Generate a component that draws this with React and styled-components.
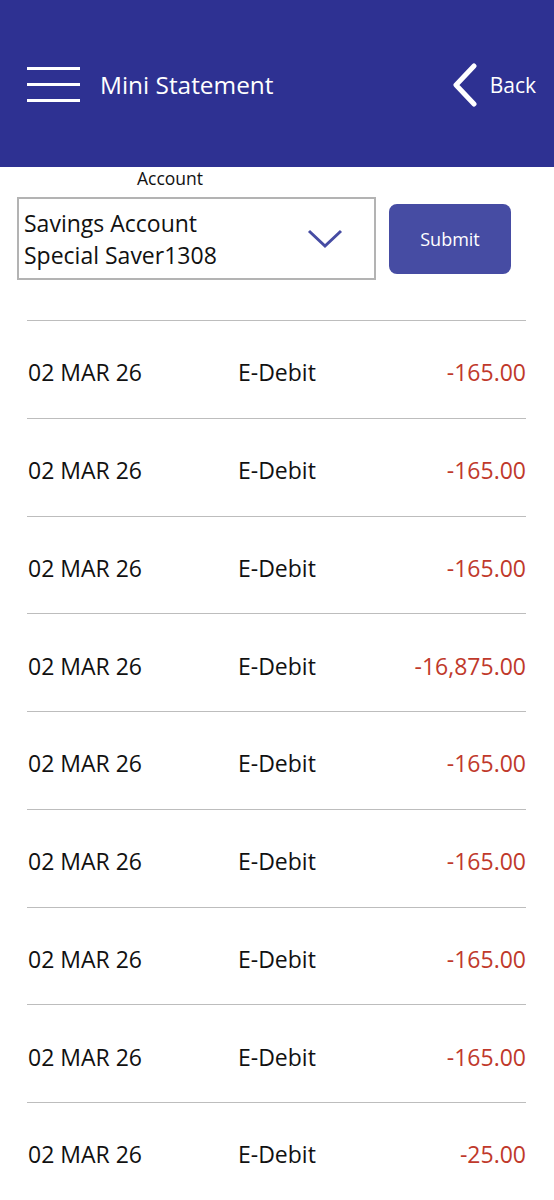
import React from "react";
import styled, { createGlobalStyle } from "styled-components";

const GlobalStyle = createGlobalStyle`
  body {
    margin: 0;
    background: #ffffff;
    font-family: "Open Sans", "Noto Sans", sans-serif;
  }
`;

const Page = styled.div`
  width: 554px;
  min-height: 1200px;
  background: #ffffff;
  overflow: hidden;
`;

const Header = styled.header`
  height: 167px;
  background: #2e3192;
  display: flex;
  align-items: center;
  padding: 2px 18px 0 27px;
  box-sizing: border-box;
  color: #ffffff;
`;

const Hamburger = styled.div`
  width: 53px;
  display: flex;
  flex-direction: column;
  gap: 13px;
  span {
    display: block;
    height: 3px;
    background: #ffffff;
  }
`;

const Title = styled.h1`
  margin: 0 0 0 20px;
  font-size: 24.4px;
  font-weight: 400;
  flex: 1;
`;

const BackButton = styled.div`
  display: flex;
  align-items: center;
  gap: 11px;
  font-size: 21px;
`;

const Form = styled.div`
  padding: 0 0 0 17px;
`;

const Label = styled.div`
  font-size: 17.5px;
  color: #111;
  padding-left: 120px;
  height: 30px;
  line-height: 22px;
`;

const Controls = styled.div`
  display: flex;
  align-items: center;
  gap: 13px;
`;

const Select = styled.div`
  width: 359px;
  height: 83px;
  box-sizing: border-box;
  border: 2px solid #b3b3b3;
  display: flex;
  align-items: center;
  justify-content: space-between;
  padding: 0 31px 0 5px;
  font-size: 23px;
  line-height: 32px;
  color: #111;
`;

const SubmitButton = styled.button`
  width: 122px;
  height: 70px;
  border: none;
  border-radius: 8px;
  background: #464ca3;
  color: #ffffff;
  font-family: inherit;
  font-size: 18px;
`;

const List = styled.div`
  margin: 40px 28px 0 27px;
`;

const Row = styled.div`
  height: 97.75px;
  box-sizing: border-box;
  border-top: 1.5px solid #bdbdbd;
  display: grid;
  grid-template-columns: 210px 1fr auto;
  align-items: center;
  padding: 6px 0 0 1px;
  font-size: 23px;
  color: #111;
`;

const Amount = styled.span`
  color: #c0392b;
  text-align: right;
`;

const rows = [
  "-165.00",
  "-165.00",
  "-165.00",
  "-16,875.00",
  "-165.00",
  "-165.00",
  "-165.00",
  "-165.00",
  "-25.00",
];

export default function App() {
  return (
    <Page>
      <GlobalStyle />
      <Header>
        <Hamburger>
          <span />
          <span />
          <span />
        </Hamburger>
        <Title>Mini Statement</Title>
        <BackButton>
          <svg width="28" height="44" viewBox="0 0 28 44">
            <path
              d="M23 3 L5 22 L23 41"
              fill="none"
              stroke="#fff"
              strokeWidth="5"
              strokeLinecap="round"
              strokeLinejoin="round"
            />
          </svg>
          Back
        </BackButton>
      </Header>
      <Form>
        <Label>Account</Label>
        <Controls>
          <Select>
            <div>
              Savings Account
              <br />
              Special Saver1308
            </div>
            <svg width="36" height="20" viewBox="0 0 36 20">
              <path
                d="M2 2 L18 17 L34 2"
                fill="none"
                stroke="#464ca3"
                strokeWidth="3"
              />
            </svg>
          </Select>
          <SubmitButton>Submit</SubmitButton>
        </Controls>
      </Form>
      <List>
        {rows.map((amt, i) => (
          <Row key={i}>
            <span>02 MAR 26</span>
            <span>E-Debit</span>
            <Amount>{amt}</Amount>
          </Row>
        ))}
      </List>
    </Page>
  );
}
